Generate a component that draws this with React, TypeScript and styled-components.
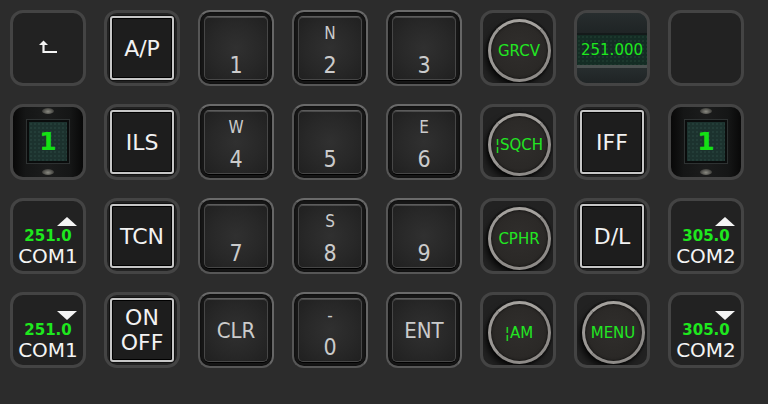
import styled, { createGlobalStyle, css } from 'styled-components'

const GlobalStyle = createGlobalStyle`
  html, body {
    margin: 0;
    padding: 0;
    background: #2c2c2c;
    min-height: 100vh;
  }
  body {
    font-family: "DejaVu Sans", "Liberation Sans", sans-serif;
  }
`

const Panel = styled.div`
  display: grid;
  grid-template-columns: repeat(8, 76px);
  grid-auto-rows: 76px;
  gap: 18px;
  padding: 10px;
`

const Frame = styled.div`
  box-sizing: border-box;
  width: 76px;
  height: 76px;
  border: 3px solid #444444;
  border-radius: 13px;
  background: #222222;
  display: flex;
  align-items: center;
  justify-content: center;
  overflow: hidden;
`

/* ---------- mode buttons (A/P, ILS ...) ---------- */
const ModeButton = styled.div`
  box-sizing: border-box;
  width: 64px;
  height: 64px;
  border: 2px solid #c6c6c6;
  border-radius: 3px;
  background: #1d1d1d;
  box-shadow: inset 0 0 0 1px #000, 0 0 0 1px #111;
  display: flex;
  align-items: center;
  justify-content: center;
  text-align: center;
  color: #f2f2f2;
  font-size: 22px;
  line-height: 25px;
  white-space: pre-line;
`

/* ---------- keypad keys ---------- */
const KeyTile = styled.div`
  box-sizing: border-box;
  width: 76px;
  height: 76px;
  border: 2px solid #565656;
  border-top-color: #6a6a6a;
  border-right-color: #666;
  border-radius: 12px;
  background: #161616;
  padding: 4px;
  display: flex;
  box-shadow: inset 0 0 2px #000;
`

const KeyFace = styled.div<{ $center?: boolean }>`
  flex: 1;
  border-radius: 5px;
  border: 1px solid #474747;
  border-top-color: #5c5c5c;
  background: radial-gradient(circle at 50% 50%, #303030 0%, #282828 55%, #202020 100%);
  box-shadow: inset 0 1px 0 rgba(255, 255, 255, 0.18), 0 1px 0 #000;
  display: flex;
  flex-direction: column;
  align-items: center;
  padding-top: 6px;
  color: #cbcbcb;
  font-family: "DejaVu Sans Condensed", "DejaVu Sans", sans-serif;
  font-stretch: condensed;
  ${(p) =>
    p.$center &&
    css`
      justify-content: center;
      padding-top: 0;
    `}
`

const KeyLetter = styled.div`
  height: 20px;
  line-height: 20px;
  font-size: 17px;
`

const KeyDigit = styled.div`
  margin-top: 10px;
  height: 24px;
  line-height: 24px;
  font-size: 23px;
`

const KeyWord = styled.div`
  font-size: 22px;
  line-height: 24px;
  margin-top: 2px;
`

/* ---------- round knobs ---------- */
const KnobTile = styled(Frame)`
  background: radial-gradient(circle at 50% 50%, #2a2a2a 0%, #222 70%);
`

const Knob = styled.div`
  box-sizing: border-box;
  width: 63px;
  height: 63px;
  margin: 5px 0 0 2px;
  border-radius: 50%;
  border: 3px solid #8e8b88;
  border-top-color: #a5a29e;
  border-left-color: #9a9794;
  background: radial-gradient(circle at 50% 45%, #302e2c 0%, #2a2826 70%, #232120 100%);
  box-shadow: -3px 4px 6px rgba(0, 0, 0, 0.75), 0 0 0 2px #1a1a1a,
    inset 0 0 3px rgba(0, 0, 0, 0.8);
  display: flex;
  align-items: center;
  justify-content: center;
  color: #22e622;
  font-size: 15px;
`

/* ---------- frequency display ---------- */
const DisplayTile = styled(Frame)`
  flex-direction: column;
  align-items: stretch;
  justify-content: flex-start;
  background: #242a2b;
`

const DisplayDark = styled.div<{ $h?: number }>`
  height: ${(p) => (p.$h ? `${p.$h}px` : 'auto')};
  flex: ${(p) => (p.$h ? 'none' : '1')};
  background: linear-gradient(180deg, #272d2e, #1f2425);
`

const DisplayBand = styled.div`
  height: 32px;
  border-top: 2px solid #141a1a;
  box-sizing: border-box;
  background-color: #142c24;
  background-image: radial-gradient(rgba(50, 90, 70, 0.25) 1px, transparent 1px);
  background-size: 4px 4px;
  display: flex;
  align-items: center;
  justify-content: center;
  color: #1ee81e;
  font-size: 15px;
`

const DisplayRule = styled.div`
  height: 3px;
  background: #4b5150;
`

/* ---------- channel window ---------- */
const ChannelTile = styled(Frame)`
  flex-direction: column;
  justify-content: space-between;
  padding: 1px 0 2px;
  background: linear-gradient(90deg, #080808 0%, #151616 18%, #1b1c1c 50%, #151616 82%, #080808 100%);
`

const Screw = styled.div`
  width: 12px;
  height: 6px;
  border-radius: 50%;
  background: radial-gradient(ellipse at 50% 60%, #8a8a82 0%, #4a4a46 60%, #1a1a1a 100%);
`

const ChannelWindow = styled.div`
  box-sizing: border-box;
  width: 42px;
  height: 43px;
  border: 2px solid #0a0c0c;
  box-shadow: 0 0 0 1px #2e3232;
  background-color: #1c322e;
  background-image: radial-gradient(rgba(60, 100, 90, 0.22) 1px, transparent 1px);
  background-size: 4px 4px;
  display: flex;
  align-items: center;
  justify-content: center;
  color: #14e014;
  font-weight: bold;
  font-size: 25px;
`

/* ---------- COM tiles ---------- */
const ComTile = styled(Frame)`
  flex-direction: column;
  justify-content: flex-start;
  padding-top: 16px;
`

const Arrow = styled.div<{ $down?: boolean }>`
  align-self: flex-end;
  margin-right: 6px;
  width: 0;
  height: 0;
  border-left: 10px solid transparent;
  border-right: 10px solid transparent;
  ${(p) =>
    p.$down
      ? css`border-top: 9px solid #f4f4f4;`
      : css`border-bottom: 9px solid #f4f4f4;`}
`

const ComFreq = styled.div`
  margin-top: 1px;
  color: #1ee81e;
  font-weight: bold;
  font-size: 15px;
  line-height: 18px;
`

const ComName = styled.div`
  color: #f4f4f4;
  font-size: 20px;
  line-height: 23px;
`

const BackIcon = () => (
  <svg width="20" height="16" viewBox="0 0 20 16">
    <polygon points="1,5 5.5,0.5 10,5" fill="#f4f4f4" />
    <polyline points="5.5,4 5.5,12 19,12" fill="none" stroke="#f4f4f4" strokeWidth="2.2" />
  </svg>
)

const Key = ({ letter, digit }: { letter?: string; digit: string }) => (
  <KeyTile>
    <KeyFace>
      <KeyLetter>{letter}</KeyLetter>
      <KeyDigit>{digit}</KeyDigit>
    </KeyFace>
  </KeyTile>
)

const WordKey = ({ label }: { label: string }) => (
  <KeyTile>
    <KeyFace $center>
      <KeyWord>{label}</KeyWord>
    </KeyFace>
  </KeyTile>
)

const Mode = ({ label }: { label: string }) => (
  <Frame>
    <ModeButton>{label}</ModeButton>
  </Frame>
)

const RoundKnob = ({ label }: { label: string }) => (
  <KnobTile>
    <Knob>{label}</Knob>
  </KnobTile>
)

const Channel = ({ value }: { value: string }) => (
  <ChannelTile>
    <Screw />
    <ChannelWindow>{value}</ChannelWindow>
    <Screw />
  </ChannelTile>
)

const Com = ({ freq, name, down }: { freq: string; name: string; down?: boolean }) => (
  <ComTile>
    <Arrow $down={down} />
    <ComFreq>{freq}</ComFreq>
    <ComName>{name}</ComName>
  </ComTile>
)

export default function App() {
  return (
    <>
      <GlobalStyle />
      <Panel>
        <Frame>
          <BackIcon />
        </Frame>
        <Mode label="A/P" />
        <Key digit="1" />
        <Key letter="N" digit="2" />
        <Key digit="3" />
        <RoundKnob label="GRCV" />
        <DisplayTile>
          <DisplayDark $h={20} />
          <DisplayBand>251.000</DisplayBand>
          <DisplayRule />
          <DisplayDark />
        </DisplayTile>
        <Frame />

        <Channel value="1" />
        <Mode label="ILS" />
        <Key letter="W" digit="4" />
        <Key digit="5" />
        <Key letter="E" digit="6" />
        <RoundKnob label="¦SQCH" />
        <Mode label="IFF" />
        <Channel value="1" />

        <Com freq="251.0" name="COM1" />
        <Mode label="TCN" />
        <Key digit="7" />
        <Key letter="S" digit="8" />
        <Key digit="9" />
        <RoundKnob label="CPHR" />
        <Mode label="D/L" />
        <Com freq="305.0" name="COM2" />

        <Com freq="251.0" name="COM1" down />
        <Mode label={'ON\nOFF'} />
        <WordKey label="CLR" />
        <Key letter="-" digit="0" />
        <WordKey label="ENT" />
        <RoundKnob label="¦AM" />
        <RoundKnob label="MENU" />
        <Com freq="305.0" name="COM2" down />
      </Panel>
    </>
  )
}
